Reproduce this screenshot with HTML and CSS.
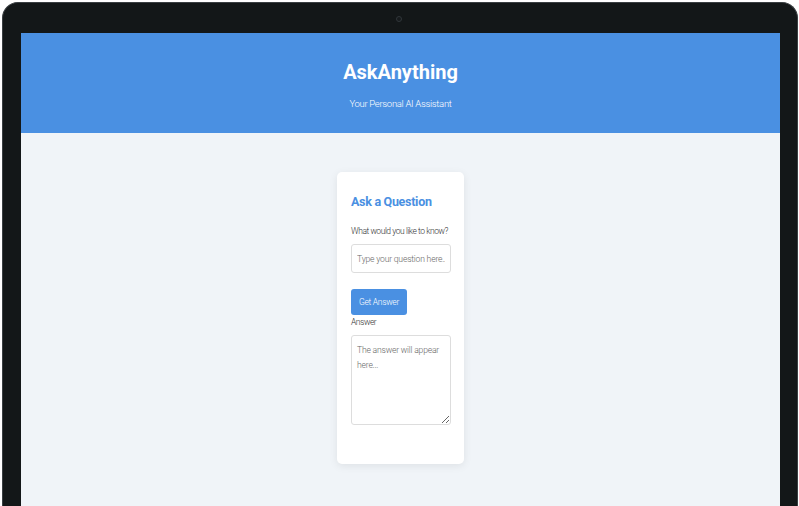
FILE: index.html
```html
<!DOCTYPE html>
<html lang="en">
<head>
<meta charset="utf-8">
<title>AskAnything</title>
<link rel="stylesheet" href="styles.css">
</head>
<body>
<div class="laptop">
  <div class="camera-bar"><span class="camera"></span></div>
  <div class="screen">
    <header class="hero">
      <h1 class="hero-title">AskAnything</h1>
      <p class="hero-sub">Your Personal AI Assistant</p>
    </header>
    <main class="content">
      <section class="card">
        <h2 class="card-title">Ask a Question</h2>
        <label class="field-label" for="q">What would you like to know?</label>
        <input class="text-input" id="q" type="text" placeholder="Type your question here...">
        <button class="btn">Get Answer</button>
        <label class="field-label answer-label" for="a">Answer</label>
        <textarea class="answer-box" id="a" placeholder="The answer will appear here..." readonly></textarea>
      </section>
    </main>
  </div>
</div>
</body>
</html>
```
FILE: styles.css
```css
* { box-sizing: border-box; }
html, body { margin: 0; padding: 0; }
body {
  width: 799px;
  height: 506px;
  overflow: hidden;
  background: #ffffff;
  font-family: Roboto, "Liberation Sans", sans-serif;
}
.laptop {
  margin: 2px 0 0 2px;
  width: 796px;
  height: 540px;
  background: #131718;
  border: 1px solid #3a3f42;
  border-bottom: none;
  border-radius: 16px 16px 0 0;
  padding: 0 17px 0 18px;
  display: flex;
  flex-direction: column;
}
.camera-bar {
  height: 30px;
  display: flex;
  align-items: center;
  justify-content: center;
  padding-top: 2px;
  padding-right: 3px;
}
.camera {
  width: 6px;
  height: 6px;
  border-radius: 50%;
  border: 1px solid #30363a;
  background: #161a1c;
}
.screen {
  flex: 1;
  background: #f0f4f8;
  display: flex;
  flex-direction: column;
}
.hero {
  background: #4a90e2;
  height: 100px;
  display: flex;
  flex-direction: column;
  align-items: center;
  padding-top: 24px;
  color: #ffffff;
}
.hero-title {
  margin: 0;
  font-size: 20px;
  line-height: 30px;
  font-weight: 700;
}
.hero-sub {
  margin: 9px 0 0;
  font-size: 9.5px;
  line-height: 16px;
  font-weight: 300;
  letter-spacing: -0.3px;
}
.content {
  display: flex;
  justify-content: center;
  padding-top: 39px;
}
.card {
  width: 127px;
  background: #ffffff;
  border-radius: 5px;
  box-shadow: 0 2px 8px rgba(0, 0, 0, 0.08);
  padding: 20px 13px 39px 14px;
  display: flex;
  flex-direction: column;
  align-items: flex-start;
}
.card-title {
  margin: 0;
  font-size: 12.5px;
  line-height: 20px;
  font-weight: 700;
  letter-spacing: -0.3px;
  color: #4a90e2;
}
.field-label {
  margin-top: 12px;
  font-size: 8.5px;
  line-height: 14px;
  letter-spacing: -0.45px;
  color: #333333;
  font-weight: 300;
  white-space: nowrap;
}
.text-input {
  margin-top: 6px;
  width: 100px;
  height: 29px;
  border: 1px solid #dddddd;
  border-radius: 3px;
  padding: 0 5px;
  font-family: inherit;
  font-size: 8.6px;
  letter-spacing: -0.2px;
  font-weight: 300;
  color: #333;
  background: #fff;
}
.text-input::placeholder, .answer-box::placeholder {
  color: #666666;
}
.btn {
  margin-top: 16px;
  width: 56px;
  height: 26px;
  border: none;
  border-radius: 3px;
  background: #4a90e2;
  color: #ffffff;
  font-family: inherit;
  font-size: 8.5px;
  letter-spacing: -0.3px;
  font-weight: 300;
  padding: 0;
}
.answer-label {
  margin-top: 1px;
  line-height: 13px;
}
.answer-box {
  margin-top: 6px;
  width: 100px;
  height: 90px;
  border: 1px solid #dddddd;
  border-radius: 3px;
  padding: 7px 5px;
  font-family: inherit;
  font-size: 8.6px;
  letter-spacing: -0.2px;
  line-height: 15px;
  font-weight: 300;
  color: #333;
  resize: vertical;
  background: #fff;
}
```
